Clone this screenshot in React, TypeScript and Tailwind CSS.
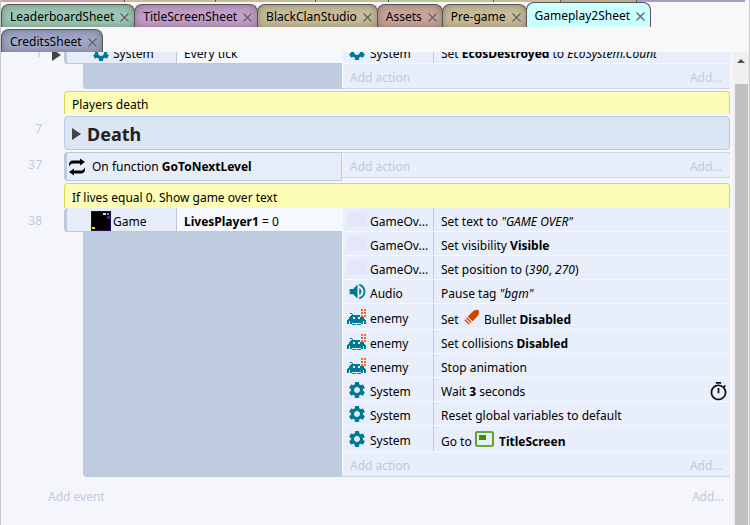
import type { ReactNode } from "react";
import { MdOutlineTimer, MdSettings, MdVolumeUp } from "react-icons/md";

interface Tab {
  name: string;
  color: string;
  active?: boolean;
}

const TABS: Tab[] = [
  { name: "LeaderboardSheet", color: "bg-[#9dc8b3]" },
  { name: "TitleScreenSheet", color: "bg-[#c39fca]" },
  { name: "BlackClanStudio", color: "bg-[#c8bc99]" },
  { name: "Assets", color: "bg-[#c9a59b]" },
  { name: "Pre-game", color: "bg-[#c8bc99]" },
  { name: "Gameplay2Sheet", color: "bg-[#ccffff]", active: true },
  { name: "CreditsSheet", color: "bg-[#9fa6c6]" },
];

interface Action {
  icon: ReactNode;
  object: string;
  text: ReactNode;
  tall?: boolean;
  wait?: boolean;
}

const ACTIONS: Action[] = [
  { icon: <TextIcon />, object: "GameOv...", text: <>Set text to <i>"GAME OVER"</i></> },
  { icon: <TextIcon />, object: "GameOv...", text: <>Set visibility <b>Visible</b></> },
  { icon: <TextIcon />, object: "GameOv...", text: <>Set position to (<i>390</i>, <i>270</i>)</> },
  { icon: <AudioIcon />, object: "Audio", text: <>Pause tag <i>"bgm"</i></> },
  { icon: <EnemyIcon />, object: "enemy", text: <>Set <BulletIcon /> Bullet <b>Disabled</b></>, tall: true },
  { icon: <EnemyIcon />, object: "enemy", text: <>Set collisions <b>Disabled</b></> },
  { icon: <EnemyIcon />, object: "enemy", text: "Stop animation" },
  { icon: <GearIcon />, object: "System", text: <>Wait <b>3</b> seconds</>, wait: true },
  { icon: <GearIcon />, object: "System", text: "Reset global variables to default" },
  { icon: <GearIcon />, object: "System", text: <>Go to <LayoutIcon /> <b>TitleScreen</b></>, tall: true },
];

export default function App() {
  return (
    <div className="flex h-screen flex-col overflow-hidden border-x border-[#c8c8c8] bg-[#f8f8f8] font-['Noto_Sans','Open_Sans',sans-serif] text-[12px] leading-4 text-black">
      <TabBar />
      <div className="flex min-h-0 flex-1">
        <main className="min-w-0 flex-1 overflow-hidden bg-[#f4f6fb] pr-[3px]">
          <div className="-mt-3 flex flex-col">
            <EventRow number="1" expander>
              <Conditions>
                <Condition icon={<GearIcon />} object="System" text="Every tick" />
              </Conditions>
              <Actions>
                <ActionRow
                  icon={<GearIcon />}
                  object="System"
                  text={<>Set <b>EcosDestroyed</b> to <i>EcoSystem.Count</i></>}
                />
                <AddAction />
              </Actions>
            </EventRow>

            <Comment className="mt-0.5 mb-0.5 h-[23px] rounded-t">Players death</Comment>

            <EventRow number="7">
              <div className="flex h-[34px] flex-1 items-center gap-1.5 rounded-sm border border-[#b5cae3] bg-[#dae6f4] pt-0.5 pl-[7px]">
                <Triangle />
                <h2 className="text-[18px] leading-6 font-bold text-[#222]">Death</h2>
              </div>
            </EventRow>

            <div className="h-0.5" />

            <EventRow number="37">
              <div className="flex h-[29px] w-[278px] shrink-0 items-center gap-1.5 rounded-l border border-l-[3px] border-[#bdcade] bg-[#e6edf8] pl-px">
                <FunctionIcon />
                <span>On function <b>GoToNextLevel</b></span>
              </div>
              <div className="min-w-0 flex-1">
                <div className="border-y border-[#ccd6ea]">
                  <AddAction />
                </div>
              </div>
            </EventRow>

            <Comment className="mt-0.5 h-[25px] rounded-t">If lives equal 0. Show game over text</Comment>

            <EventRow number="38">
              <Conditions>
                <Condition icon={<GameIcon />} object="Game" text={<><b>LivesPlayer1</b> = 0</>} />
              </Conditions>
              <Actions>
                {ACTIONS.map((a, i) => (
                  <ActionRow key={i} {...a} />
                ))}
                <AddAction />
              </Actions>
            </EventRow>

            <div className="mt-3 flex justify-between pr-1.5 pl-[47px] text-[#bfcae0]">
              <button>Add event</button>
              <button>Add...</button>
            </div>
          </div>
        </main>
        <ScrollBar />
      </div>
    </div>
  );
}

function TabBar() {
  return (
    <header className="flex h-[52px] shrink-0 flex-col">
      {/* bottom edge of the tab row above */}
      <div className="flex h-0.5 divide-x divide-[#555] pr-1">
        <span className="w-[124px] bg-[#c8a99b]" />
        <span className="w-[91px] bg-[#c8bc99]" />
        <span className="w-[100px] bg-[#c8bc99]" />
        <span className="w-[73px] bg-[#c8bc99]" />
        <span className="w-[105px] bg-[#bdc898]" />
        <span className="w-[67px] bg-[#c8bc99]" />
        <span className="w-[76px] bg-[#b7ad8c]" />
        <span className="flex-1 bg-[#a79cc8]" />
      </div>
      <div role="tablist" className="flex flex-wrap items-end gap-y-0.5 pl-px">
        {TABS.map((t) => (
          <div
            key={t.name}
            className={`-ml-px flex items-center gap-1.5 rounded-t-lg border border-b-0 border-[#555] pt-0.5 pr-[5px] pl-2 ${t.color} ${
              t.active ? "h-[25px]" : "h-[23px] shadow-[inset_0_0_9px_rgba(0,0,0,0.3)]"
            }`}
          >
            <button role="tab" aria-selected={!!t.active}>{t.name}</button>
            <button aria-label={`Close ${t.name}`}>
              <svg width="9" height="9" viewBox="0 0 9 9" fill="none" stroke="#666" strokeWidth="1.4">
                <path d="M.5.5l8 8M8.5.5l-8 8" />
              </svg>
            </button>
          </div>
        ))}
      </div>
    </header>
  );
}

function ScrollBar() {
  return (
    <div className="flex w-4 shrink-0 flex-col items-center bg-[#f0f0f0]">
      <button aria-label="Scroll up" className="flex h-8 w-full items-start justify-center pt-[7px]">
        <svg width="8" height="4" viewBox="0 0 8 4"><path d="M0 4l4-4 4 4z" fill="#505050" /></svg>
      </button>
      <div className="w-[13px] flex-1 bg-[#c1c1c1]" />
    </div>
  );
}

function EventRow({ number, expander, children }: { number: string; expander?: boolean; children: ReactNode }) {
  return (
    <section className="flex">
      <div className="flex h-6 w-[63px] shrink-0 items-center pt-px pr-[3px] text-[#bfcae0]">
        <span className="w-[41px] text-right">{number}</span>
        {expander && <span className="ml-auto pt-1"><Triangle /></span>}
      </div>
      {children}
    </section>
  );
}

function Conditions({ children }: { children: ReactNode }) {
  return (
    <div className="flex w-[278px] shrink-0 flex-col">
      {children}
      <div className="ml-[19px] flex-1 rounded-bl bg-[#bfcbdf]" />
    </div>
  );
}

function Condition({ icon, object, text }: { icon: ReactNode; object: string; text: ReactNode }) {
  return (
    <div className="flex h-6 rounded-l border-b border-l-[3px] border-[#bdcade] bg-[#e6edf8]">
      <div className="flex w-[110px] items-center border-r border-[#bdcade] pl-[22px]">
        <span className="flex w-6 shrink-0 justify-center pt-0.5">{icon}</span>
        <span className="pt-1">{object}</span>
      </div>
      <div className="flex flex-1 items-center bg-[#f5f8ff] pl-[7px]">
        <span className="pt-1">{text}</span>
      </div>
    </div>
  );
}

function Actions({ children }: { children: ReactNode }) {
  return <div className="min-w-0 flex-1 border-b border-[#ccd6ea]">{children}</div>;
}

function ActionRow({ icon, object, text, tall, wait }: Action) {
  return (
    <div className={`flex items-center border-b border-l border-[#f5f8ff] bg-[#e8eefa] ${tall ? "h-[26px]" : "h-6"}`}>
      <div className="flex w-[91px] shrink-0 items-center self-stretch border-r border-[#bdcade] pl-0.5">
        <span className="mr-px flex w-6 shrink-0 justify-center">{icon}</span>
        <span className="pt-1 whitespace-nowrap">{object}</span>
      </div>
      <span className="flex-1 pt-1 pl-[7px]">{text}</span>
      {wait && (
        <span className="shrink-0 pt-1 pr-px">
          <MdOutlineTimer size={21} color="#111" />
        </span>
      )}
    </div>
  );
}

function AddAction() {
  return (
    <div className="flex h-6 items-center justify-between border-l border-[#f5f8ff] bg-[#e8eefa] pt-[3px] pr-2 pl-[7px] text-[#bfcae0]">
      <button>Add action</button>
      <button>Add...</button>
    </div>
  );
}

function Comment({ className, children }: { className: string; children: ReactNode }) {
  return (
    <p className={`ml-[63px] flex items-center border border-b-0 border-[#dada50] bg-[#fdfdb8] pt-1 pl-[7px] ${className}`}>
      {children}
    </p>
  );
}

function Triangle() {
  return (
    <svg width="9" height="12" viewBox="0 0 9 12" className="shrink-0">
      <path d="M0 0l9 6-9 6z" fill="#444" />
    </svg>
  );
}

function GearIcon() {
  return <MdSettings size={20} color="#007a94" className="shrink-0" />;
}

function AudioIcon() {
  return <MdVolumeUp size={21} color="#007a94" className="shrink-0" />;
}

const INVADER = [
  "...##..............",
  ".....#.......#.....",
  "....###########....",
  "...#############...",
  "..####..###..####..",
  "..####..###..####..",
  ".#################.",
  "###################",
  "##.#############.##",
  "##.#############.##",
  "##.##.........##.##",
  ".....####.####.....",
];

function EnemyIcon() {
  return (
    <svg width="20" height="16" viewBox="0 0 20 16" shapeRendering="crispEdges" className="shrink-0">
      {INVADER.flatMap((line, y) =>
        [...line].map((c, x) =>
          c === "#" ? <rect key={`${x}-${y}`} x={x} y={y + 4} width="1" height="1" fill="#007a94" /> : null
        )
      )}
      <rect x="13" width="7" height="8" fill="#e8eefa" />
      <g fill="#f26a2e">
        {[0, 3, 6].map((y) => (
          <g key={y}>
            <rect x="14" y={y} width="2" height="2" />
            <rect x="17" y={y} width="2" height="2" />
          </g>
        ))}
      </g>
    </svg>
  );
}

function TextIcon() {
  return (
    <svg width="20" height="15" viewBox="0 0 20 15" className="shrink-0">
      <rect width="20" height="15" fill="#e6e7fa" />
      <path d="M1 2.5h18M1 5.5h18M1 8.5h18M1 11.5h18" stroke="#e2e2f8" strokeDasharray="2 1" />
    </svg>
  );
}

function GameIcon() {
  return (
    <svg width="20" height="20" viewBox="0 0 20 20" className="shrink-0">
      <rect x=".5" y=".5" width="19" height="19" fill="#000" stroke="#1e0a50" />
      <rect x="12" y="2" width="3" height="2" fill="#ddd" />
      <rect x="16" y="2" width="2" height="2" fill="#1fd12c" />
      <rect x="16" y="5" width="3" height="3" fill="#5a10b4" />
      <rect x="1" y="16" width="3" height="2" fill="#e6e62a" />
    </svg>
  );
}

function FunctionIcon() {
  return (
    <svg width="18" height="18" viewBox="0 0 18 18" className="shrink-0">
      <path d="M1 8.500V6.500C1 3.800 2.600 2.600 5 2.600h7V.5L17 4l-5 3.500V5.400H5.500C3.500 5.400 2 6.500 1 8.500z" />
      <path d="M17 9.500v2c0 2.700-1.600 3.900-4 3.900H6v2.100L1 14l5-3.500v2.100h6.500c2 0 3.500-1.100 4.500-3.100z" />
    </svg>
  );
}

function BulletIcon() {
  return (
    <svg width="16" height="16" viewBox="0 0 16 16" fill="#cc4400" className="mr-px ml-0.5 inline-block align-[-1px]">
      <path d="M14.500.8c.9 2.500.5 4.700-1 6.400L8.600 12.300 3.700 7.400l5.100-4.900C10.500 1 12.500.3 14.500.8z" />
      <path d="M2.900 8.300l4.800 4.800-.9.900L2 9.200zM1.200 10.300l4.500 4.500-.9.900L.3 11.200z" />
    </svg>
  );
}

function LayoutIcon() {
  return (
    <svg width="19" height="16" viewBox="0 0 19 16" className="mr-0.5 inline-block align-[-1px]">
      <rect x="1" y="1" width="17" height="14" rx="1" fill="none" stroke="#3a9100" strokeWidth="1.6" />
      <rect x="4" y="4" width="7" height="5" fill="#3a9100" />
    </svg>
  );
}
